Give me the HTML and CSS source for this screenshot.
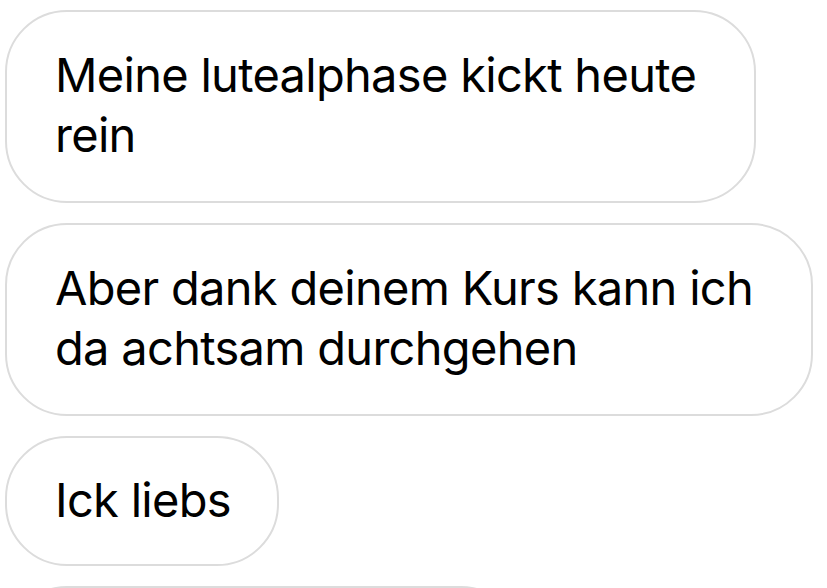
FILE: index.html
```html
<!DOCTYPE html>
<html lang="de">
<head>
    <meta charset="UTF-8">
    <meta name="viewport" content="width=device-width, initial-scale=1.0">
    <title>Nachrichten</title>
    <link rel="stylesheet" href="styles.css">
</head>
<body>
    <div class="thread">
        <div class="bubble multi">Meine lutealphase kickt heute<br>rein</div>
        <div class="bubble multi">Aber dank deinem Kurs kann ich<br>da achtsam durchgehen</div>
        <div class="bubble">Ick liebs</div>
        <div class="bubble next">&nbsp;</div>
    </div>
</body>
</html>
```

FILE: styles.css
```css
body {
    margin: 0;
    background: #ffffff;
    font-family: Inter, "Liberation Sans", sans-serif;
    color: #000000;
    overflow: hidden;
}
.thread {
    display: flex;
    flex-direction: column;
    align-items: flex-start;
    gap: 20px;
    padding: 10px 0 0 5px;
}
.bubble {
    border: 2px solid #dcdcdc;
    border-radius: 62px;
    padding: 32px 46px 34px 48px;
    font-size: 47px;
    line-height: 60px;
    letter-spacing: -0.7px;
    white-space: nowrap;
    background: #ffffff;
}
.bubble.multi {
    padding-top: 33px;
    padding-bottom: 36px;
    padding-right: 58px;
}
.bubble.next {
    width: 420px;
}
```
